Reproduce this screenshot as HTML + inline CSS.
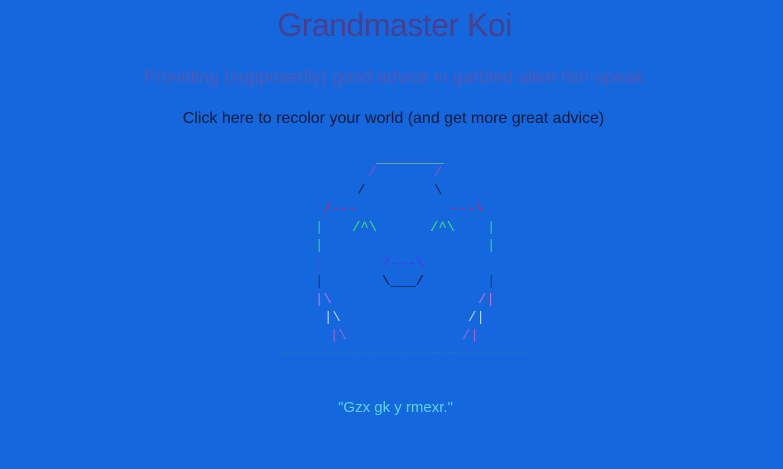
<!DOCTYPE html><html><head><style>
body{margin:0;width:783px;height:469px;background:#1467dc;font-family:"Liberation Sans",sans-serif;position:relative;overflow:hidden}
.c{position:absolute;left:0;width:783px;text-align:center;white-space:nowrap}
.a{position:absolute;font:14px/14px "Liberation Mono",monospace;white-space:pre}
</style></head><body>
<div class="c" style="top:7px;font-size:32px;color:#4b3f8c;letter-spacing:-0.5px;padding-left:6px;box-sizing:border-box">Grandmaster Koi</div>
<div class="c" style="top:67px;font-size:18px;color:#5058b8;padding-left:4px;box-sizing:border-box">Providing (supposedly) good advice in garbled alien fish-speak</div>
<div class="c" style="top:110px;font-size:16px;color:#0d1a3a;padding-left:4px;box-sizing:border-box">Click here to recolor your world (and get more great advice)</div>
<div style="position:absolute;left:376px;top:163px;width:68px;height:1px;background:#6a9aa8"></div>
<span class="a" style="left:368px;top:166px;color:#8a4fd0">/</span>
<span class="a" style="left:434px;top:166px;color:#8a4fd0">/</span>
<span class="a" style="left:357px;top:184px;color:#0e2a50">/</span>
<span class="a" style="left:434px;top:184px;color:#0e2a50">\</span>
<span class="a" style="left:323px;top:202px;color:#d0206a">/---</span>
<span class="a" style="left:450px;top:202px;color:#d0206a">---\</span>
<span class="a" style="left:315px;top:221px;color:#30d080">|</span>
<span class="a" style="left:352px;top:221px;color:#40e070">/^\</span>
<span class="a" style="left:430px;top:221px;color:#40e070">/^\</span>
<span class="a" style="left:487px;top:221px;color:#30d080">|</span>
<span class="a" style="left:315px;top:239px;color:#30d080">|</span>
<span class="a" style="left:487px;top:239px;color:#30d080">|</span>
<span class="a" style="left:315px;top:257px;color:#3a50e8">|</span>
<span class="a" style="left:382px;top:257px;color:#5a30f0">/---\</span>
<span class="a" style="left:487px;top:257px;color:#3a50e8">|</span>
<span class="a" style="left:315px;top:275px;color:#0e3a70">|</span>
<span class="a" style="left:382px;top:275px;color:#0a1a40">\___/</span>
<span class="a" style="left:487px;top:275px;color:#0e3a70">|</span>
<span class="a" style="left:315px;top:293px;color:#c070e0">|\</span>
<span class="a" style="left:478px;top:293px;color:#c070e0">/|</span>
<span class="a" style="left:324px;top:311px;color:#b0d8f0">|\</span>
<span class="a" style="left:468px;top:311px;color:#b0d8f0">/|</span>
<span class="a" style="left:330px;top:329px;color:#a060d8">|\</span>
<span class="a" style="left:462px;top:329px;color:#a060d8">/|</span>
<span class="a" style="left:280px;top:347px;color:#2a7ab0;font-size:9px">~~~~~~~~~~~~~~~~~~~~~~~~~~~~~~~~~~~~~~~~~~~~~~</span>
<div class="c" style="top:399px;font-size:15px;color:#5ed6e8;padding-left:8px;box-sizing:border-box">"Gzx gk y rmexr."</div>
</body></html>
